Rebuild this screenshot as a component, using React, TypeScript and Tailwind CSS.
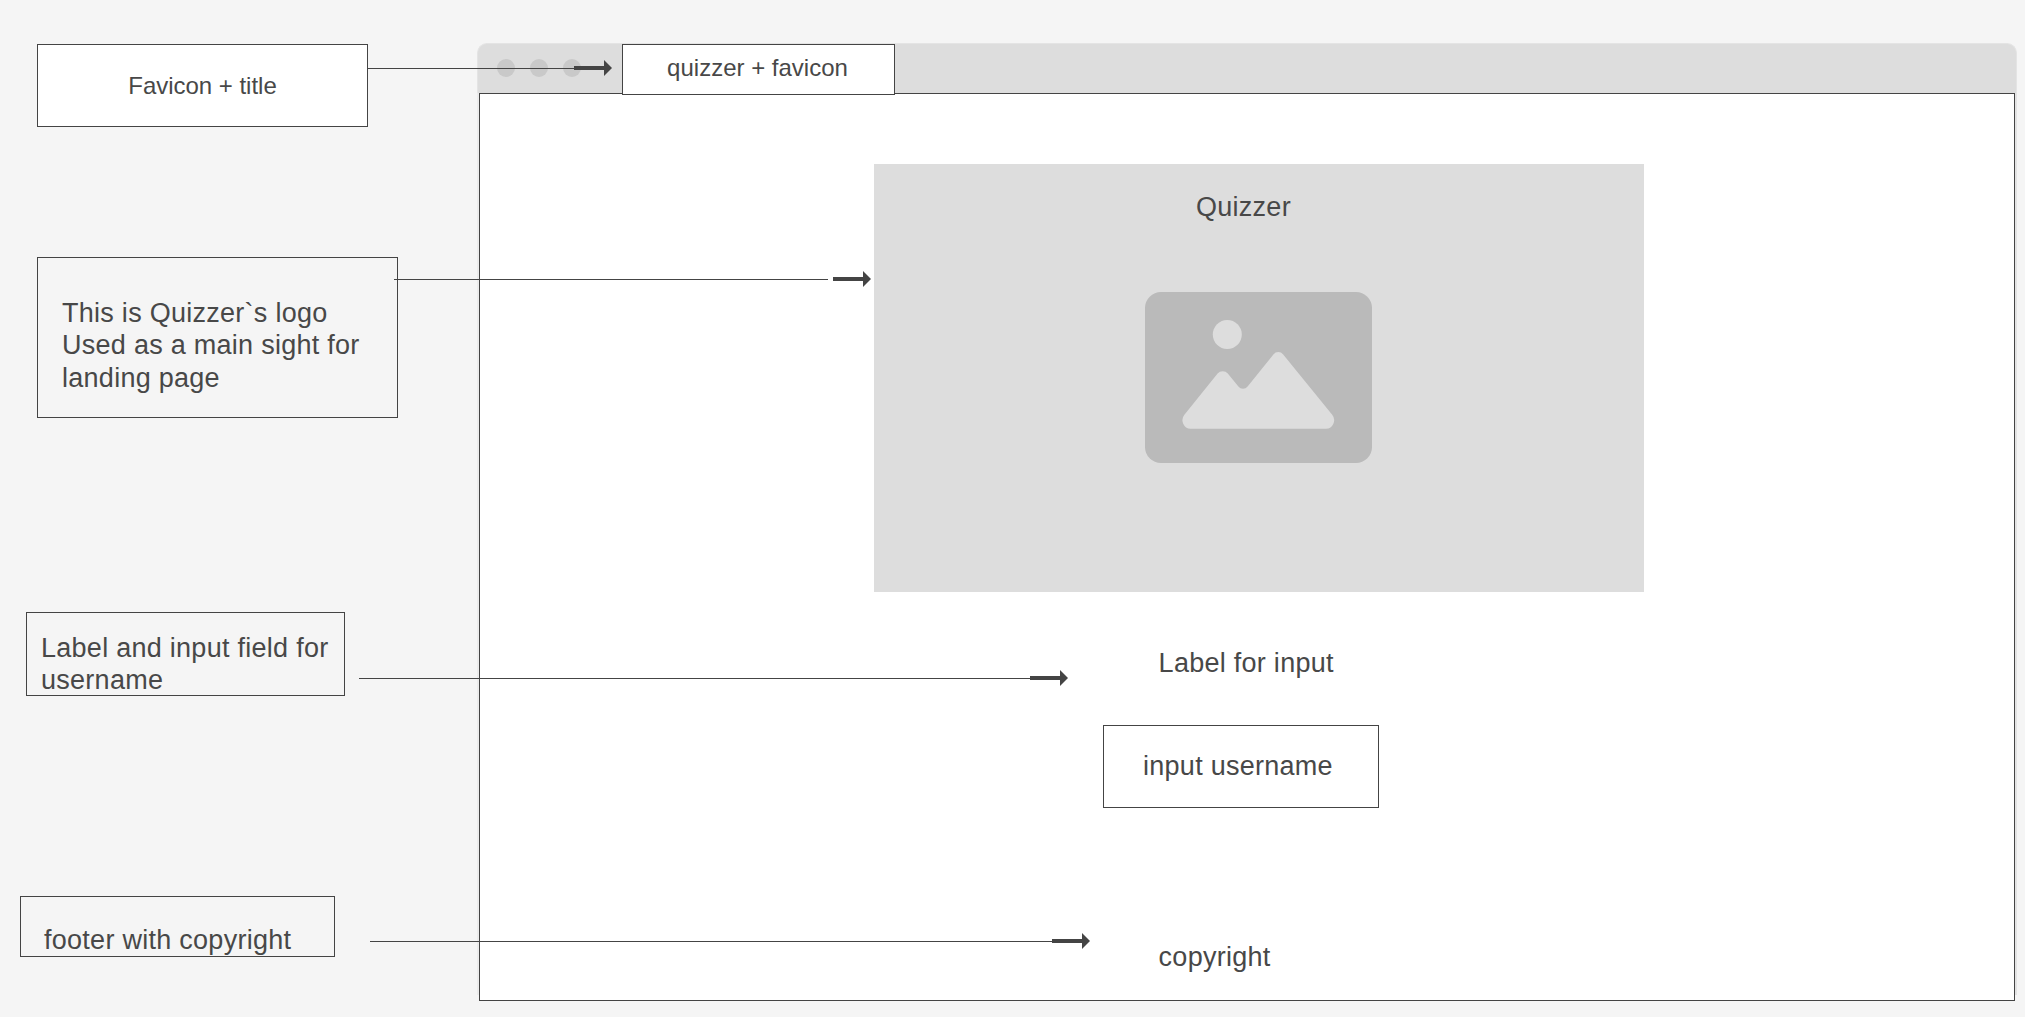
import type { ReactNode } from "react";

function Note({ className, children }: { className: string; children: ReactNode }) {
  return <div className={`shrink-0 border border-[#444] ${className}`}>{children}</div>;
}

/* Connector from a note to the part of the mockup it describes */
function Connector({ className, line }: { className: string; line: string }) {
  return (
    <div className={`absolute flex h-4 items-center ${className}`}>
      <div className={`mt-px h-px bg-[#444] ${line}`} />
      <div className="ml-auto h-1 w-[30px] bg-[#444]" />
      <svg width="8" height="16" viewBox="0 0 8 16" className="shrink-0">
        <path d="M0 0L8 8L0 16Z" fill="#444" />
      </svg>
    </div>
  );
}

function PictureIcon() {
  return (
    <svg width="227" height="171" viewBox="0 0 227 171">
      <rect width="227" height="171" rx="16" fill="#bababa" />
      <circle cx="82.3" cy="42.6" r="14.5" fill="#ddd" />
      <path
        d="M39.4 122.8L72.6 81.6A6.6 6.6 0 0 1 82.8 81.6L93.4 94.6A5.8 5.8 0 0 0 102.6 94.6L128.4 62.4A6.3 6.3 0 0 1 138.2 62.4L187.2 122.8A8.6 8.6 0 0 1 181 136.8H45.6A8.6 8.6 0 0 1 39.4 122.8Z"
        fill="#ddd"
      />
    </svg>
  );
}

export default function App() {
  return (
    <div className="relative flex h-[1017px] w-[2025px] overflow-hidden bg-[#f5f5f5] font-['Liberation_Sans',Arial,sans-serif] text-[27px] leading-8 tracking-[0.27px] text-[#484848]">
      <aside className="flex w-[477px] shrink-0 flex-col items-start pt-11">
        <Note className="ml-[37px] flex h-[83px] w-[331px] items-center justify-center bg-white text-2xl tracking-[-0.02px]">
          Favicon + title
        </Note>
        <Note className="mt-[130px] ml-[37px] h-[161px] w-[361px] pt-[38.6px] pl-6 leading-[32.5px] whitespace-nowrap">
          This is Quizzer`s logo
          <br />
          Used as a main sight for
          <br />
          landing page
        </Note>
        <Note className="mt-[194px] ml-[26px] h-[84px] w-[319px] pt-[19px] pl-3.5 whitespace-nowrap">
          Label and input field for
          <br />
          username
        </Note>
        <Note className="mt-[200px] ml-5 h-[61px] w-[315px] pt-[27px] pl-[23px] whitespace-nowrap">
          footer with copyright
        </Note>
      </aside>

      <section className="mt-[43px] flex h-[958px] w-[1540px] shrink-0 flex-col">
        <header className="flex h-[50px] shrink-0 items-start rounded-t-[10px] border-x border-t border-[#e4e4e4] bg-[#ddd]">
          <div className="mt-[15px] ml-[19px] flex gap-[15px]">
            <span className="size-[18px] rounded-full bg-[#c9c9c9]" />
            <span className="size-[18px] rounded-full bg-[#c9c9c9]" />
            <span className="size-[18px] rounded-full bg-[#c9c9c9]" />
          </div>
          <div className="relative ml-[41px] flex h-[51px] w-[273px] shrink-0 justify-center border border-[#444] bg-white pt-[7px] pr-[2px] text-2xl leading-8 tracking-normal">
            quizzer + favicon
          </div>
        </header>

        <div className="flex h-[908px]">
          <div className="h-[902px] w-0.5 bg-[#ececec]" />
          <main className="flex w-[1536px] flex-col border border-[#444] bg-white">
            <div className="mt-[70px] ml-[394px] flex h-[428px] w-[770px] shrink-0 flex-col bg-[#ddd]">
              <h1 className="mt-[27px] ml-[322px] h-8">Quizzer</h1>
              <div className="mt-[69px] ml-[271px]">
                <PictureIcon />
              </div>
            </div>
            <label className="mt-[55px] ml-[678.6px] h-8">Label for input</label>
            <div className="mt-[46px] ml-[623px] flex h-[83px] w-[276px] shrink-0 border border-[#444] pt-6 pl-[39px]">
              input username
            </div>
            <footer className="mt-[133px] ml-[678.6px] h-8">copyright</footer>
          </main>
          <div className="h-[902px] w-0.5 bg-[#e3e3e3]" />
        </div>
      </section>

      <Connector className="top-[60px] left-[368px] w-[244px]" line="w-[206px]" />
      <Connector className="top-[271px] left-[394px] w-[477px]" line="w-[434px]" />
      <Connector className="top-[670px] left-[359px] w-[709px]" line="w-[671px]" />
      <Connector className="top-[933px] left-[370px] w-[720px]" line="w-[682px]" />
    </div>
  );
}
